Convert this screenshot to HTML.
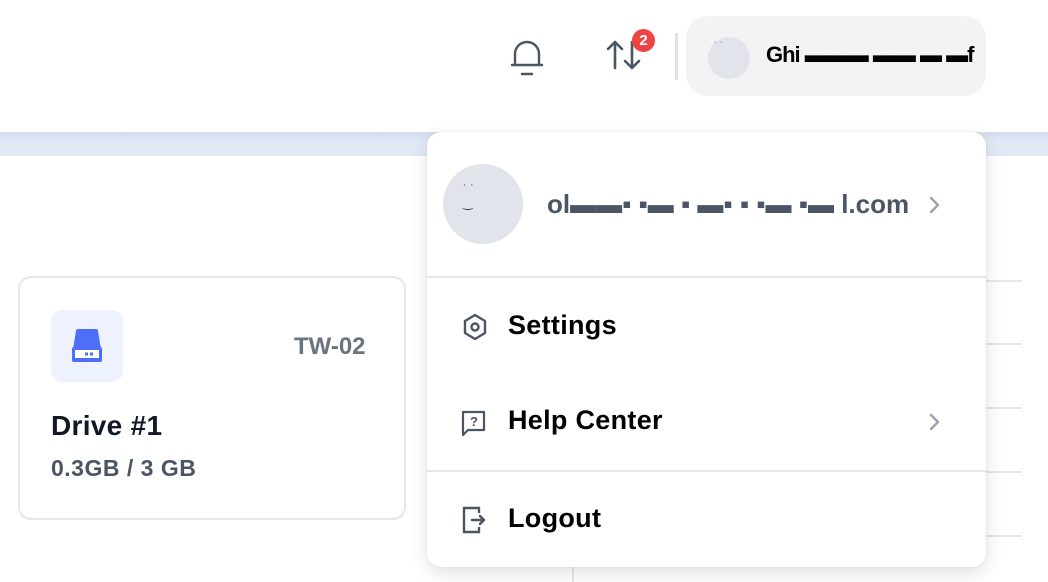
<!DOCTYPE html>
<html><head><meta charset="utf-8"><style>
*{margin:0;padding:0;box-sizing:border-box}
body{width:1048px;height:582px;overflow:hidden;background:#fff;font-family:"Liberation Sans",sans-serif;position:relative}
.abs{position:absolute}
.band{left:0;top:132px;width:1048px;height:24px;background:linear-gradient(#d3dced,#e1e8f6 40%,#e2e9f7)}
.card{left:18px;top:276px;width:388px;height:244px;border:2px solid #e6e7eb;border-radius:13px;background:#fff}
.menu{left:427px;top:132px;width:559px;height:435px;background:#fff;border-radius:14px;box-shadow:0 6px 18px rgba(0,0,0,.12),0 0 2px rgba(0,0,0,.08)}
.item{font-weight:700;font-size:27px;color:#000;position:absolute;left:81px;letter-spacing:0.3px}
.hl{background:#e5e7eb;height:2px;position:absolute}
</style></head><body>
<svg class="abs" style="left:508px;top:38px" width="38" height="40" viewBox="0 0 38 40" fill="none" stroke="#4b5563" stroke-width="2.4" stroke-linecap="round"><path d="M7 27V16a12 12 0 0 1 24 0v11h3H4z" stroke-linejoin="round"/><path d="M14 36h10"/></svg>
<svg class="abs" style="left:604px;top:38px" width="40" height="34" viewBox="0 0 40 34" fill="none" stroke="#4b5563" stroke-width="2.6" stroke-linecap="round" stroke-linejoin="round"><path d="M11 30V4M4 11l7-7 7 7"/><path d="M28 4v26M21 23l7 7 7-7"/></svg>
<div class="abs" style="left:632px;top:29px;width:23px;height:23px;border-radius:50%;background:#ef4444;color:#fff;font-weight:700;font-size:15px;text-align:center;line-height:23px">2</div>
<div class="abs" style="left:675px;top:33px;width:3px;height:47px;background:#e1e3e8"></div>
<div class="abs" style="left:686px;top:16px;width:300px;height:80px;background:#f2f3f5;border-radius:22px"></div>
<div class="abs" style="left:708px;top:37px;width:42px;height:42px;border-radius:50%;background:#e1e4ea"></div>
<div class="abs" style="left:714px;top:41px;font-size:10px;color:#333">˙ ˙</div>
<div class="abs" style="left:766px;top:42px;font-size:22px;font-weight:700;color:#000;letter-spacing:-1px">Ghi ▬▬▬ ▬▬ ▬ ▬f</div>
<div class="abs band"></div>
<div class="hl" style="left:986px;top:280px;width:36px"></div>
<div class="hl" style="left:986px;top:343px;width:36px"></div>
<div class="hl" style="left:986px;top:407px;width:36px"></div>
<div class="hl" style="left:986px;top:471px;width:36px"></div>
<div class="hl" style="left:986px;top:535px;width:36px"></div>
<div class="abs" style="left:572px;top:566px;width:2px;height:16px;background:#e5e7eb"></div>
<div class="abs card"></div>
<div class="abs" style="left:51px;top:310px;width:72px;height:72px;background:#eef1fe;border-radius:11px"></div>
<svg class="abs" style="left:70px;top:327px" width="34" height="38" viewBox="0 0 34 38"><path d="M8 2h18a2 2 0 0 1 2 2l3 18H3L6 4a2 2 0 0 1 2-2z" fill="#4f6ef7"/><rect x="2" y="20" width="30" height="15" rx="2" fill="#4f6ef7"/><rect x="5" y="23" width="24" height="8" fill="#fff"/><rect x="15" y="25.5" width="3" height="3" fill="#4f6ef7"/><rect x="20" y="25.5" width="3" height="3" fill="#4f6ef7"/></svg>
<div class="abs" style="left:294px;top:333px;font-size:24px;font-weight:700;color:#6b7280">TW-02</div>
<div class="abs" style="left:51px;top:410px;font-size:28px;font-weight:700;color:#111827;letter-spacing:0.3px">Drive #1</div>
<div class="abs" style="left:51px;top:455px;font-size:23px;font-weight:700;color:#4b5563;letter-spacing:0.5px">0.3GB / 3 GB</div>
<div class="abs menu">
<div class="abs" style="left:16px;top:32px;width:80px;height:80px;border-radius:50%;background:#e1e4ea"></div>
<div class="abs" style="left:36px;top:50px;font-size:12px;color:#333">˙ ˙<br>‿</div>
<div class="abs" style="left:120px;top:57px;font-size:26px;font-weight:700;color:#4b5563;letter-spacing:0px">ol▬▬▪ ▪▬ ▪ ▬▪ ▪ ▪▬ ▪▬ l.com</div>
<svg class="abs" style="left:500px;top:62px" width="14" height="22" viewBox="0 0 14 22" fill="none" stroke="#9ca3af" stroke-width="2.5" stroke-linecap="round" stroke-linejoin="round"><path d="M4 4l7 7-7 7"/></svg>
<div class="hl" style="left:0;top:144px;width:559px"></div>
<svg class="abs" style="left:34px;top:180px" width="28" height="30" viewBox="0 0 28 30" fill="none" stroke="#4b5563" stroke-width="2.4" stroke-linejoin="round"><path d="M14 3l10 6v12l-10 6-10-6V9z"/><circle cx="14" cy="15" r="3.5"/></svg>
<div class="item" style="top:178px">Settings</div>
<svg class="abs" style="left:33px;top:277px" width="28" height="28" viewBox="0 0 28 28" fill="none" stroke="#4b5563" stroke-width="2.2" stroke-linejoin="round"><path d="M3 3h21v18H8l-5 5z"/><text x="10" y="17" font-size="13" font-family="Liberation Sans" fill="#4b5563" stroke="none" font-weight="700">?</text></svg>
<div class="item" style="top:273px">Help Center</div>
<svg class="abs" style="left:500px;top:279px" width="14" height="22" viewBox="0 0 14 22" fill="none" stroke="#9ca3af" stroke-width="2.5" stroke-linecap="round" stroke-linejoin="round"><path d="M4 4l7 7-7 7"/></svg>
<div class="hl" style="left:0;top:338px;width:559px"></div>
<svg class="abs" style="left:34px;top:373px" width="28" height="30" viewBox="0 0 28 30" fill="none" stroke="#4b5563" stroke-width="2.4"><path d="M18 8V3H3v24h15v-5"/><path d="M11 15h12M19 11l4 4-4 4" stroke-linecap="round" stroke-linejoin="round"/></svg>
<div class="item" style="top:371px">Logout</div>
</div>
</body></html>
